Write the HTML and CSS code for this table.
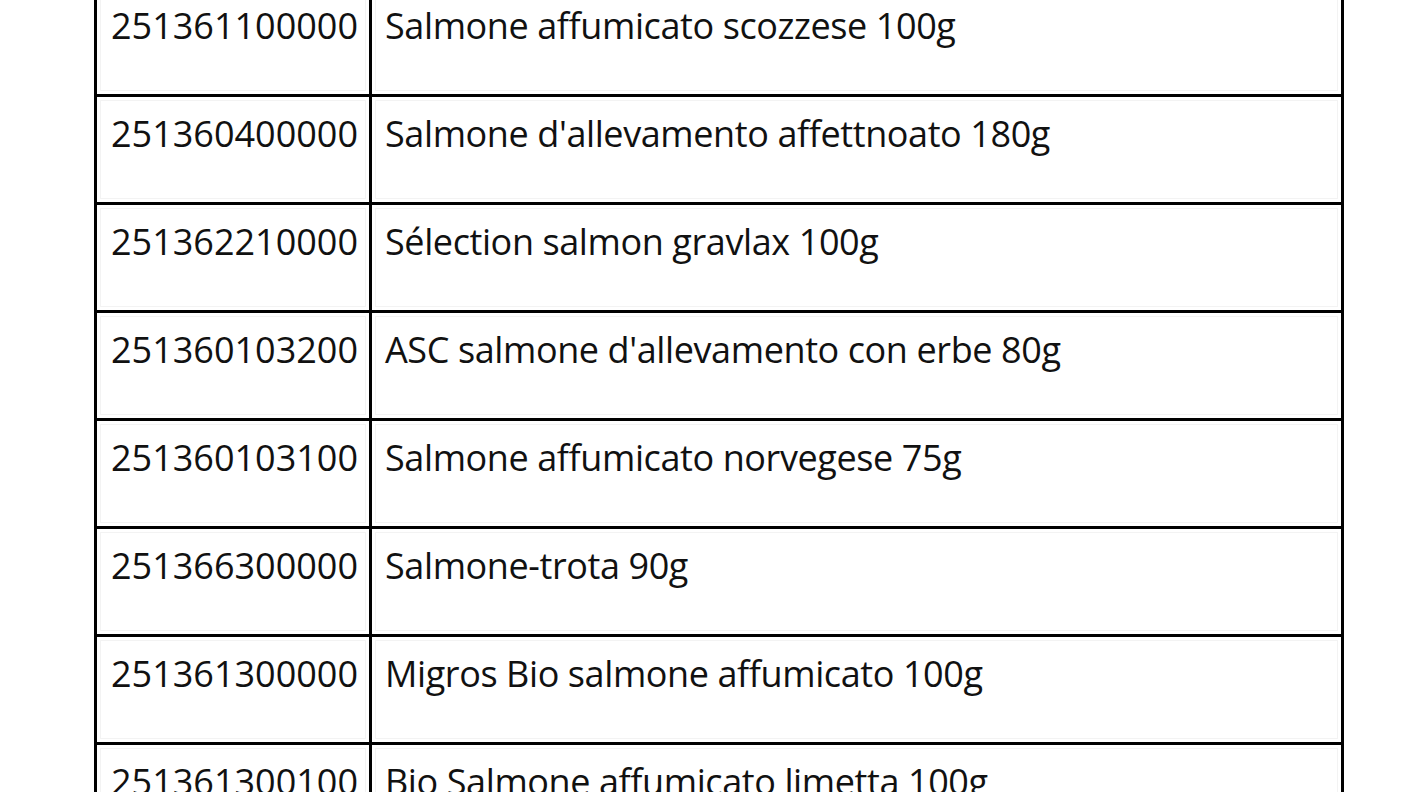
FILE: index.html
```html
<!DOCTYPE html>
<html>
<head>
<meta charset="utf-8">
<link rel="stylesheet" href="styles.css">
</head>
<body>
<table class="items">
  <colgroup><col class="c-code"><col class="c-name"></colgroup>
  <tbody>
    <tr><td>251361100000</td><td>Salmone affumicato scozzese 100g</td></tr>
    <tr><td>251360400000</td><td>Salmone d'allevamento affettnoato 180g</td></tr>
    <tr><td>251362210000</td><td>Sélection salmon gravlax 100g</td></tr>
    <tr><td>251360103200</td><td>ASC salmone d'allevamento con erbe 80g</td></tr>
    <tr><td>251360103100</td><td>Salmone affumicato norvegese 75g</td></tr>
    <tr><td>251366300000</td><td>Salmone-trota 90g</td></tr>
    <tr><td>251361300000</td><td>Migros Bio salmone affumicato 100g</td></tr>
    <tr><td>251361300100</td><td>Bio Salmone affumicato limetta 100g</td></tr>
  </tbody>
</table>
</body>
</html>
```
FILE: styles.css
```css
html, body {
  margin: 0;
  padding: 0;
  background: #fff;
  overflow: hidden;
}
.items {
  border-collapse: separate;
  border-spacing: 0;
  table-layout: fixed;
  width: 1250px;
  margin: -14px 0 0 94px;
  border-top: 3px solid #000;
  font-family: "Open Sans", "Noto Sans", sans-serif;
  font-size: 36px;
  color: #111;
}
.c-code { width: 278px; }
.c-name { width: 972px; }
.items td {
  box-sizing: border-box;
  height: 108px;
  vertical-align: top;
  padding: 12px 0 0 13px;
  line-height: normal;
  letter-spacing: -0.4px;
  border-right: 3px solid #000;
  border-bottom: 3px solid #000;
  box-shadow: inset 0 0 0 3px #fff, inset 0 0 0 4px #f3f3f3;
  white-space: nowrap;
}
.items td:first-child {
  border-left: 3px solid #000;
  padding-left: 14px;
  letter-spacing: 0;
}
```
